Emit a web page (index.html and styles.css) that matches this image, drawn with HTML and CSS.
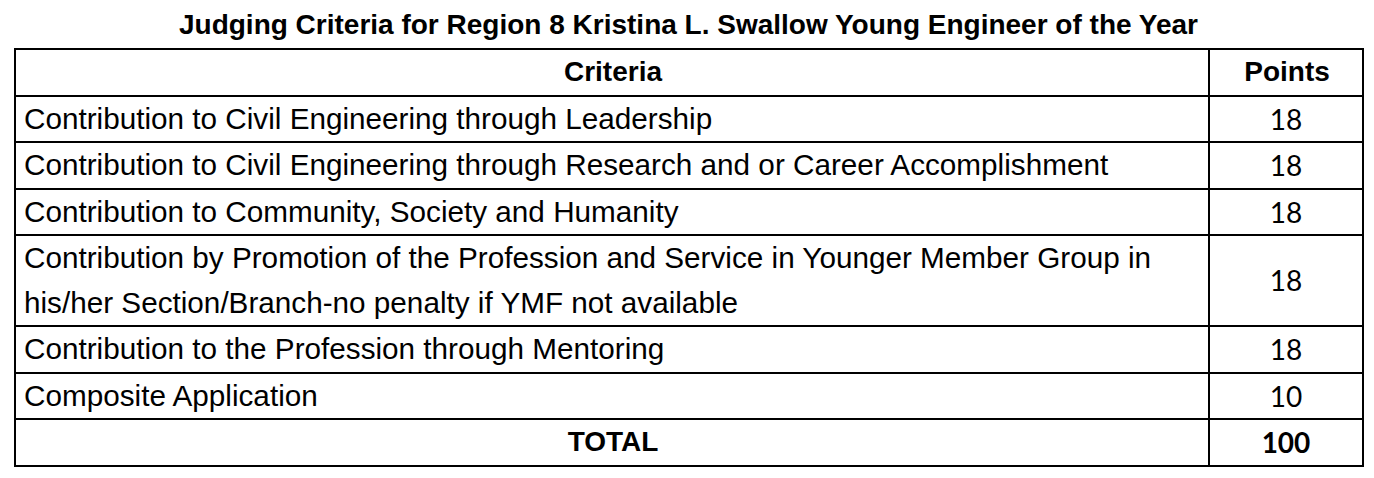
FILE: index.html
```html
<!DOCTYPE html>
<html lang="en">

<head>
  <meta charset="UTF-8">
  <meta name="viewport" content="width=device-width, initial-scale=1.0">
  <title>Judging Criteria</title>
  <link rel="stylesheet" href="styles.css">
</head>

<body>
  <!-- Title -->
  <h1 class="title">Judging Criteria for Region 8 Kristina L. Swallow Young Engineer of the Year</h1>

  <!-- Criteria table -->
  <table class="criteria">
    <colgroup>
      <col class="col-criteria">
      <col class="col-points">
    </colgroup>
    <thead>
      <tr>
        <th>Criteria</th>
        <th>Points</th>
      </tr>
    </thead>
    <tbody>
      <tr>
        <td>Contribution to Civil Engineering through Leadership</td>
        <td class="num">18</td>
      </tr>
      <tr>
        <td>Contribution to Civil Engineering through Research and or Career Accomplishment</td>
        <td class="num">18</td>
      </tr>
      <tr>
        <td>Contribution to Community, Society and Humanity</td>
        <td class="num">18</td>
      </tr>
      <tr>
        <td>Contribution by Promotion of the Profession and Service in Younger Member Group in<br>his/her Section/Branch-no penalty if YMF not available</td>
        <td class="num">18</td>
      </tr>
      <tr>
        <td>Contribution to the Profession through Mentoring</td>
        <td class="num">18</td>
      </tr>
      <tr>
        <td>Composite Application</td>
        <td class="num">10</td>
      </tr>
    </tbody>
    <tfoot>
      <tr>
        <th>TOTAL</th>
        <th class="num total">100</th>
      </tr>
    </tfoot>
  </table>
</body>

</html>
```

FILE: styles.css
```css
/* Page */
body {
  margin: 0;
  padding: 8px 11px 0 14px;
  background: #fff;
  color: #000;
  font-family: "Liberation Sans", sans-serif;
}

/* Title */
.title {
  margin: 0 0 7px;
  text-align: center;
  font-size: 28px;
  line-height: 33px;
  font-weight: bold;
}

/* Table */
.criteria {
  width: 1348px;
  table-layout: fixed;
  border-collapse: collapse;
  border: 2px solid #000;
}

.col-criteria {
  width: 1194px;
}

.col-points {
  width: 154px;
}

.criteria th,
.criteria td {
  border: 2px solid #000;
  padding: 0 6px 0 8px;
  font-size: 29.7px;
  line-height: 44.5px;
  text-align: left;
  vertical-align: middle;
  white-space: nowrap;
}

.criteria th {
  text-align: center;
  font-weight: bold;
  font-size: 28px;
}

/* Number cells */
.criteria .num {
  text-align: center;
  font-family: "Lato", "Open Sans", sans-serif;
  font-size: 28px;
  padding: 0 4px;
}

.criteria .total {
  font-weight: bold;
}
```
